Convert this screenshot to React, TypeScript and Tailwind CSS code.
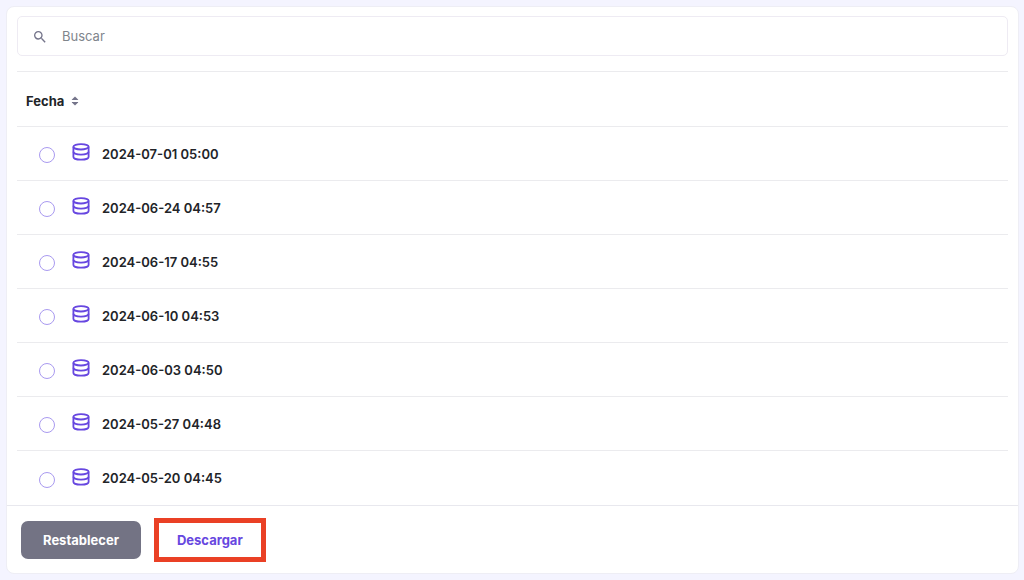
import { useState } from "react";
import { MdSearch } from "react-icons/md";

const backups = [
  "2024-07-01 05:00",
  "2024-06-24 04:57",
  "2024-06-17 04:55",
  "2024-06-10 04:53",
  "2024-06-03 04:50",
  "2024-05-27 04:48",
  "2024-05-20 04:45",
];

function DatabaseIcon() {
  return (
    <svg
      viewBox="0 0 18 18"
      className="size-[18px] shrink-0 text-[#6747e0]"
      fill="none"
      stroke="currentColor"
      strokeWidth="1.8"
      aria-hidden="true"
    >
      <ellipse cx="9" cy="3.8" rx="7.6" ry="2.7" />
      <path d="M1.4 3.8v10.1c0 1.6 3.4 2.8 7.6 2.8s7.6-1.2 7.6-2.8V3.8" />
      <path d="M1.4 8.8c0 1.6 3.4 2.8 7.6 2.8s7.6-1.2 7.6-2.8" />
    </svg>
  );
}

function SortIcon() {
  return (
    <svg viewBox="0 0 8 10" className="h-[10px] w-2" fill="#74748a" aria-hidden="true">
      <path d="M4 0.4 7.1 3.5Q7.4 4.1 6.8 4.1H1.2Q0.6 4.1 0.9 3.5Z" />
      <path d="M4 9.6 7.1 6.5Q7.4 5.9 6.8 5.9H1.2Q0.6 5.9 0.9 6.5Z" />
    </svg>
  );
}

function SearchBox() {
  return (
    <div className="flex h-10 items-center rounded-[5px] border border-[#eeebf3] px-3.5">
      <MdSearch className="mt-0.5 size-4 shrink-0 text-[#74748a]" aria-hidden="true" />
      <input
        type="search"
        aria-label="Buscar"
        placeholder="Buscar"
        className="ml-3.5 min-w-0 flex-1 bg-transparent text-[13px] leading-5 outline-none placeholder:text-[#80858c]"
      />
    </div>
  );
}

export default function App() {
  const [selected, setSelected] = useState("");

  return (
    <main className="flex min-h-screen bg-[#f4f4ff] p-1.5 pr-[5px] font-['Inter','Liberation_Sans',sans-serif] text-[#222428]">
      <section className="flex flex-1 flex-col rounded-lg border border-[#eeeef5] bg-white">
        <div className="px-2.5 pt-[9px]">
          <SearchBox />
          <table className="mt-[15px] w-full border-separate border-spacing-0 border-t border-[#ebebee]">
            <thead>
              <tr>
                <th scope="col" className="h-[55px] border-b border-[#ebebee] px-[9px] text-left">
                  <button
                    type="button"
                    className="flex items-center gap-[7px] pt-1 text-[13px] leading-5 font-bold"
                  >
                    Fecha
                    <SortIcon />
                  </button>
                </th>
              </tr>
            </thead>
            <tbody>
              {backups.map((date) => (
                <tr key={date} className="group">
                  <td className="h-[54px] border-b border-[#ebebee] py-0 pr-3 pl-[22px] group-last:border-b-0">
                    <label className="flex items-center text-[13px] leading-5 font-semibold">
                      <span className="flex pt-[3px]">
                        <input
                          type="radio"
                          name="backup"
                          value={date}
                          checked={selected === date}
                          onChange={() => setSelected(date)}
                          className="size-4 appearance-none rounded-full border border-[#a99af0] checked:border-[5px]"
                        />
                      </span>
                      <span className="ml-[17px] flex pb-[3px]">
                        <DatabaseIcon />
                      </span>
                      <span className="ml-3">{date}</span>
                    </label>
                  </td>
                </tr>
              ))}
            </tbody>
          </table>
        </div>
        <footer className="flex flex-1 items-center gap-[13px] border-t border-[#e8e8ee] px-3.5">
          <button
            type="button"
            className="h-[38px] rounded-[7px] bg-[#737384] px-[22px] text-[13px] leading-5 font-bold text-white"
          >
            Restablecer
          </button>
          <button
            type="button"
            className="h-11 border-5 border-[#ea4025] px-[18px] text-[13px] leading-5 font-bold text-[#6747e0]"
          >
            Descargar
          </button>
        </footer>
      </section>
    </main>
  );
}
